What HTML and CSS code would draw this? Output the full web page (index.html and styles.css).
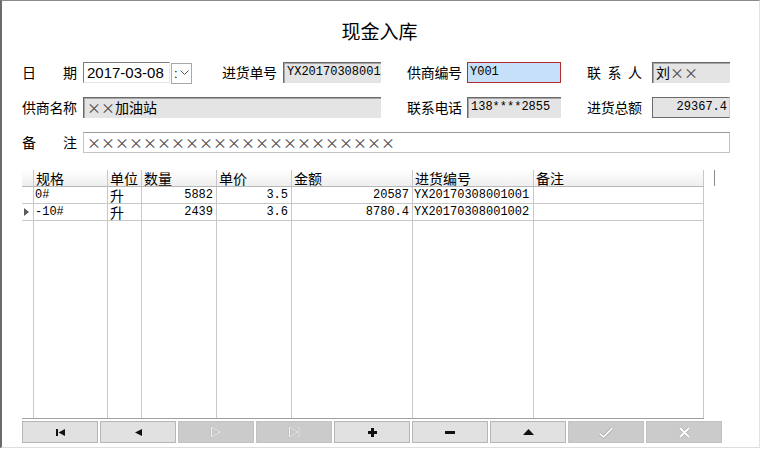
FILE: index.html
```html
<!doctype html>
<html lang="zh-CN">
  <head>
    <meta charset="UTF-8" />
    <meta name="viewport" content="width=device-width, initial-scale=1.0" />
    <title>现金入库</title>
    <link rel="stylesheet" href="styles.css">
  </head>
  <body>
    <div class="window">
      <h1 class="title">现金入库</h1>

      <div class="content">
        <div class="form">
          <label class="lbl spread"><span>日</span><span>期</span></label>
          <div class="date-wrap">
            <div class="box date">2017-03-08</div>
            <div class="spin">
              <span>:</span>
              <svg width="9" height="6" viewBox="0 0 9 6"><path d="M0.5 0.5 L4.5 4.5 L8.5 0.5" fill="none" stroke="#555" stroke-width="1"/></svg>
            </div>
          </div>
          <label class="lbl">进货单号</label>
          <div class="box ro mono w98">YX20170308001</div>
          <label class="lbl">供商编号</label>
          <div class="box focus mono w94">Y001</div>
          <label class="lbl spread"><span>联</span><span>系</span><span>人</span></label>
          <div class="box ro w78">刘<span class="fw">××</span></div>

          <label class="lbl">供商名称</label>
          <div class="box ro name"><span class="fw">××</span>加油站</div>
          <label class="lbl col5">联系电话</label>
          <div class="box ro mono w94">138****2855</div>
          <label class="lbl">进货总额</label>
          <div class="box sunk mono w78">29367.4</div>

          <label class="lbl spread"><span>备</span><span>注</span></label>
          <div class="box memo"><span class="fw">××××××××××××××××××××××</span></div>
        </div>

        <div class="grid-area">
          <div class="grid">
            <div class="grow head">
              <div class="c ind"></div>
              <div class="c">规格</div>
              <div class="c">单位</div>
              <div class="c">数量</div>
              <div class="c">单价</div>
              <div class="c">金额</div>
              <div class="c">进货编号</div>
              <div class="c">备注</div>
            </div>
            <div class="grow">
              <div class="c ind"></div>
              <div class="c mono">0#</div>
              <div class="c">升</div>
              <div class="c mono num">5882</div>
              <div class="c mono num">3.5</div>
              <div class="c mono num">20587</div>
              <div class="c mono">YX20170308001001</div>
              <div class="c"></div>
            </div>
            <div class="grow">
              <div class="c ind">
                <svg width="5" height="8" viewBox="0 0 5 8"><path d="M0 0 L5 4 L0 8Z" fill="#5a5a5a"/></svg>
              </div>
              <div class="c mono">-10#</div>
              <div class="c">升</div>
              <div class="c mono num">2439</div>
              <div class="c mono num">3.6</div>
              <div class="c mono num">8780.4</div>
              <div class="c mono">YX20170308001002</div>
              <div class="c"></div>
            </div>
            <div class="grow filler">
              <div class="c ind"></div>
              <div class="c"></div>
              <div class="c"></div>
              <div class="c"></div>
              <div class="c"></div>
              <div class="c"></div>
              <div class="c"></div>
              <div class="c"></div>
            </div>
          </div>
          <div class="edge"></div>
        </div>

        <div class="toolbar">
          <div class="btn">
            <svg width="9" height="7" viewBox="0 0 9 7"><rect x="0" y="0" width="2" height="7"/><path d="M9 0 L2.5 3.5 L9 7Z"/></svg>
          </div>
          <div class="btn">
            <svg width="7" height="7" viewBox="0 0 7 7"><path d="M7 0 L0 3.5 L7 7Z"/></svg>
          </div>
          <div class="btn off">
            <svg width="12" height="12" viewBox="0 0 12 12">
              <path d="M1.5 1 L10.5 6 L1.5 11Z" fill="none" stroke="#b4b4b4" stroke-width="1.6"/>
              <path d="M1.5 1 L10.5 6 L1.5 11Z" fill="none" stroke="#fff" stroke-width="0.8"/>
            </svg>
          </div>
          <div class="btn off">
            <svg width="13" height="12" viewBox="0 0 13 12">
              <path d="M1.5 1 L9.5 6 L1.5 11Z M11 1 L11 11" fill="none" stroke="#b4b4b4" stroke-width="1.6"/>
              <path d="M1.5 1 L9.5 6 L1.5 11Z M11 1 L11 11" fill="none" stroke="#fff" stroke-width="0.8"/>
            </svg>
          </div>
          <div class="btn">
            <svg width="9" height="9" viewBox="0 0 9 9"><path d="M3 0 H6 V3 H9 V6 H6 V9 H3 V6 H0 V3 H3Z"/></svg>
          </div>
          <div class="btn">
            <svg width="10" height="3" viewBox="0 0 10 3"><rect width="10" height="3"/></svg>
          </div>
          <div class="btn">
            <svg width="11" height="6" viewBox="0 0 11 6"><path d="M5.5 0 L11 6 L0 6Z"/></svg>
          </div>
          <div class="btn off">
            <svg width="16" height="13" viewBox="0 0 16 13">
              <path d="M1.5 7.5 L5.5 11 L14.5 2" fill="none" stroke="#b0b0b0" stroke-width="3.2" stroke-linejoin="round"/>
              <path d="M1.5 7.5 L5.5 11 L14.5 2" fill="none" stroke="#fff" stroke-width="1.6" stroke-linejoin="round"/>
            </svg>
          </div>
          <div class="btn off">
            <svg width="13" height="13" viewBox="0 0 13 13">
              <path d="M2 2 L11 11 M11 2 L2 11" fill="none" stroke="#b0b0b0" stroke-width="3.4"/>
              <path d="M2 2 L11 11 M11 2 L2 11" fill="none" stroke="#fff" stroke-width="1.8"/>
            </svg>
          </div>
        </div>
      </div>
    </div>
  </body>
</html>
```

FILE: styles.css
```css
* {
  margin: 0;
  padding: 0;
  box-sizing: border-box;
}

body {
  font-family: "Noto Sans CJK SC", "Noto Sans", sans-serif;
  font-size: 14px;
  color: #000;
  background: #fff;
}

.window {
  width: 760px;
  height: 448px;
  border-left: 2px solid #6b6b6b;
  border-top: 1px solid #8a8a8a;
  border-right: 1px solid #e2e2e2;
  border-bottom: 1px solid #dedede;
  padding-top: 19px;
  background: #fff;
}

.title {
  font-size: 19px;
  font-weight: normal;
  line-height: 22px;
  text-align: center;
  padding-right: 2px;
}

.content {
  padding-left: 20px;
}

/* 表头表单 */
.form {
  display: grid;
  grid-template-columns: 61px 139px 61px 124px 60px 120px 65px 78px;
  grid-auto-rows: 21px;
  row-gap: 14px;
  margin-top: 20px;
  align-items: center;
}

.lbl {
  width: 55px;
  line-height: 21px;
  white-space: nowrap;
  letter-spacing: -0.3px;
}

.lbl.spread {
  display: flex;
  justify-content: space-between;
  letter-spacing: 0;
}

.date-wrap {
  display: flex;
  gap: 1px;
}

.box {
  height: 21px;
  line-height: 19px;
  padding: 0 2px;
  white-space: nowrap;
}

.mono {
  font-family: "Liberation Mono", "DejaVu Sans Mono", monospace;
  font-size: 12px;
}

.fw {
  font-feature-settings: "fwid";
  color: #4a4a4a;
}

.date {
  width: 87px;
  font-family: "Liberation Sans", Arial, sans-serif;
  font-size: 15px;
  padding-left: 3px;
  border-top: 1px solid #7a7a7a;
  border-left: 1px solid #7a7a7a;
  border-right: 1px solid #e6e6e6;
  border-bottom: 1px solid #e6e6e6;
}

.spin {
  width: 21px;
  height: 21px;
  margin-top: 1px;
  border: 1px solid #a8a8a8;
  display: flex;
  align-items: center;
  gap: 2px;
  padding-left: 2px;
  font-family: "Liberation Sans", sans-serif;
  font-size: 13px;
}

.ro {
  background: #e4e4e4;
  border-top: 1px solid #6a6a6a;
  border-left: 1px solid #6a6a6a;
  box-shadow: inset 1px 1px 0 #a6a6a6;
  padding-left: 3px;
}

.sunk {
  background: #e4e4e4;
  border: 1px solid #6a6a6a;
  border-right-color: #cfcfcf;
  text-align: right;
  padding-right: 2px;
}

.focus {
  background: #c6e0fa;
  border: 1px solid #b02a2f;
  padding-left: 2px;
}

.w98 { width: 98px; }
.w94 { width: 94px; }
.w78 { width: 78px; }

.name {
  grid-column: 2 / 5;
  width: 298px;
}

.memo {
  grid-column: 2 / 9;
  border: 1px solid #c4c4c4;
  border-top-color: #9a9a9a;
  padding-left: 3px;
}

/* 明细表格 */
.grid-area {
  display: flex;
  align-items: flex-start;
  margin-top: 17px;
}

.grid {
  width: 682px;
  height: 249px;
  display: flex;
  flex-direction: column;
  border-bottom: 1px solid #a0a0a0;
}

.grow {
  display: grid;
  grid-template-columns: 11px 74px 34px 75px 75px 121px 121px 171px;
  height: 17px;
  line-height: 16px;
  border-bottom: 1px solid #c8c8c8;
}

.grow.head {
  background: linear-gradient(#ffffff, #eeeeee);
  border-bottom-color: #b8b8b8;
}

.grow.filler {
  flex: 1;
  border-bottom: none;
}

.c {
  border-left: 1px solid #c8c8c8;
  padding: 0 1px 0 2px;
  white-space: nowrap;
}

.c.mono {
  padding-left: 1px;
}

.c.num {
  text-align: right;
  padding-right: 3px;
}

.c:last-child {
  border-right: 1px solid #c8c8c8;
}

.c.ind {
  border-left: none;
  padding: 0 0 0 2px;
  display: flex;
  align-items: center;
}

.edge {
  width: 1px;
  height: 16px;
  margin-left: 10px;
  background: #8c8c8c;
}

/* 导航按钮 */
.toolbar {
  display: flex;
  gap: 2px;
  margin-top: 2px;
}

.btn {
  width: 76px;
  height: 22px;
  background: #e1e1e1;
  border: 1px solid #b6b6b6;
  display: flex;
  align-items: center;
  justify-content: center;
}

.btn svg {
  fill: #111;
}

.btn.off {
  background: #cbcbcb;
  border-color: #c2c2c2;
}
```
